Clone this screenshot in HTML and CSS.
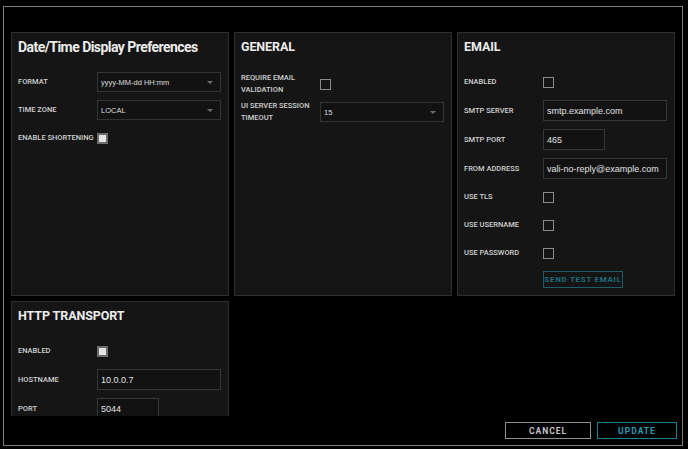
FILE: index.html
```html
<!DOCTYPE html>
<html>
<head>
<meta charset="utf-8">
<link rel="stylesheet" href="styles.css">
</head>
<body>
<div class="dialog">
  <div class="content">
    <div class="grid">
      <section class="card">
        <h2 class="title">Date/Time Display Preferences</h2>
        <div class="rows">
          <div class="row"><span class="label">FORMAT</span><div class="select"><span>yyyy-MM-dd HH:mm</span><i class="caret"></i></div></div>
          <div class="row"><span class="label">TIME ZONE</span><div class="select"><span>LOCAL</span><i class="caret"></i></div></div>
          <div class="row"><span class="label">ENABLE SHORTENING</span><span class="check checked"></span></div>
        </div>
      </section>
      <section class="card">
        <h2 class="title caps">GENERAL</h2>
        <div class="rows">
          <div class="row"><span class="label">REQUIRE EMAIL<br>VALIDATION</span><span class="check"></span></div>
          <div class="row"><span class="label">UI SERVER SESSION<br>TIMEOUT</span><div class="select"><span>15</span><i class="caret"></i></div></div>
        </div>
      </section>
      <section class="card">
        <h2 class="title caps">EMAIL</h2>
        <div class="rows">
          <div class="row"><span class="label">ENABLED</span><span class="check"></span></div>
          <div class="row tall"><span class="label">SMTP SERVER</span><div class="input">smtp.example.com</div></div>
          <div class="row tall"><span class="label">SMTP PORT</span><div class="input short">465</div></div>
          <div class="row tall"><span class="label">FROM ADDRESS</span><div class="input">vali-no-reply@example.com</div></div>
          <div class="row"><span class="label">USE TLS</span><span class="check"></span></div>
          <div class="row"><span class="label">USE USERNAME</span><span class="check"></span></div>
          <div class="row"><span class="label">USE PASSWORD</span><span class="check"></span></div>
          <div class="row btnrow"><span class="label"></span><button class="test">SEND TEST EMAIL</button></div>
        </div>
      </section>
      <section class="card">
        <h2 class="title caps">HTTP TRANSPORT</h2>
        <div class="rows">
          <div class="row"><span class="label">ENABLED</span><span class="check checked"></span></div>
          <div class="row tall"><span class="label">HOSTNAME</span><div class="input">10.0.0.7</div></div>
          <div class="row tall"><span class="label">PORT</span><div class="input short">5044</div></div>
        </div>
      </section>
    </div>
  </div>
  <div class="footer">
    <button class="btn cancel">CANCEL</button>
    <button class="btn update">UPDATE</button>
  </div>
</div>
</body>
</html>
```

FILE: styles.css
```css
* { box-sizing: border-box; }
html, body { margin: 0; padding: 0; background: #000; }
body {
  width: 688px;
  height: 449px;
  overflow: hidden;
  font-family: Roboto, "Liberation Sans", sans-serif;
  color: #cfcfcf;
}
.dialog {
  margin: 6px 0 0 3px;
  width: 680px;
  height: 440px;
  border: 1px solid #7c7c7c;
  display: flex;
  flex-direction: column;
}
.content {
  height: 409px;
  flex: none;
  overflow: hidden;
  padding: 25px 0 0 7px;
}
.grid {
  display: grid;
  grid-template-columns: 218px 218px 218px;
  grid-auto-rows: 264px;
  column-gap: 5px;
  row-gap: 5px;
}
.card {
  background: #151515;
  border: 1px solid #2f2f2f;
  padding: 5px 7px 0 6px;
}
.title {
  margin: 0 0 16px 0;
  font-family: Roboto, "Liberation Sans", sans-serif;
  font-size: 14px;
  line-height: 18px;
  font-weight: bold;
  color: #ececec;
  letter-spacing: -0.55px;
  white-space: nowrap;
}
.title.caps { font-size: 12.5px; letter-spacing: -0.1px; }
.rows {
  display: flex;
  flex-direction: column;
  gap: 8px;
}
.row {
  display: grid;
  grid-template-columns: 79px 1fr;
  align-items: center;
  height: 20px;
}
.row.tall { height: 21px; }
.row.btnrow { height: 17px; }
.label {
  font-family: Roboto, "Liberation Sans", sans-serif;
  font-size: 7.5px;
  line-height: 12px;
  font-weight: 500;
  color: #d0d0d0;
  white-space: nowrap;
}
.select {
  height: 20px;
  border: 1px solid #343434;
  background: #121212;
  display: flex;
  align-items: center;
  justify-content: space-between;
  padding: 0 7px 0 3px;
  font-family: "Liberation Sans", sans-serif;
  font-size: 7.5px;
  color: #dedede;
}
.caret {
  width: 0;
  height: 0;
  border-left: 3.5px solid transparent;
  border-right: 3.5px solid transparent;
  border-top: 3.5px solid #6e6e6e;
}
.input {
  height: 21px;
  border: 1px solid #363636;
  background: #121212;
  display: flex;
  align-items: center;
  padding: 0 3px;
  font-family: "Liberation Sans", sans-serif;
  font-size: 9px;
  color: #e2e2e2;
}
.input.short { width: 62px; }
.check {
  width: 11px;
  height: 11px;
  border: 1px solid #8a8a8a;
  background: transparent;
}
.check.checked {
  border: 2px solid #6c6c6c;
  background: #e4e4e4;
}
.test {
  justify-self: start;
  width: 80px;
  height: 17px;
  padding: 0;
  background: transparent;
  border: 1px solid #1c5d69;
  color: #1f6e7e;
  font-family: Roboto, "Liberation Sans", sans-serif;
  font-size: 8px;
  font-weight: bold;
  letter-spacing: 0.7px;
}
.footer {
  display: flex;
  justify-content: flex-end;
  gap: 6px;
  padding: 6px 5px 0 0;
}
.btn {
  height: 17px;
  padding: 0;
  background: transparent;
  font-family: Roboto, "Liberation Sans", sans-serif;
  font-size: 8.5px;
  font-weight: bold;
  letter-spacing: 1px;
}
.cancel { width: 86px; border: 1px solid #8e8e8e; color: #c4c4c4; }
.update { width: 80px; border: 1px solid #1a7f92; color: #2a9db3; }
```
